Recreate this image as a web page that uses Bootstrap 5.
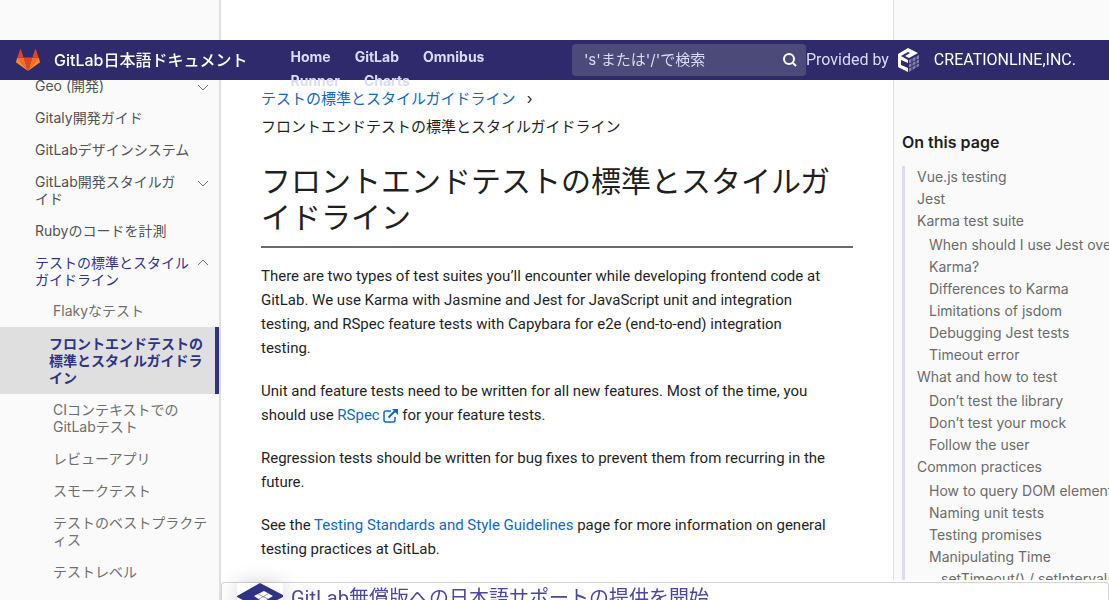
<!DOCTYPE html>
<html lang="ja">
<head>
<meta charset="utf-8">
<meta name="viewport" content="width=device-width, initial-scale=1">
<title>フロントエンドテストの標準とスタイルガイドライン | GitLab日本語ドキュメント</title>
<link href="https://cdn.jsdelivr.net/npm/bootstrap@5.3.0/dist/css/bootstrap.min.css" rel="stylesheet">
<style>
  body { font-family: Inter, "Noto Sans CJK JP", sans-serif; font-size: 15px; line-height: 24px; color: #1f1f1f; background: #fff; }
  a { text-decoration: none; color: #1068bf; }

  .site-header { top: 40px; height: 40px; background: #2f2a6b; z-index: 1030; padding: 0 33px 0 16px; color: #dbdbf8; }
  .site-header a { color: #dbdbf8; }
  .site-header .brand-link, .site-header .company-link { color: #fff; font-size: 16px; white-space: nowrap; }
  .site-header .brand-link { font-weight: 500; gap: 14px; }
  .site-header .company-link { gap: 14px; }
  .provider { font-family: Roboto, "Noto Sans CJK JP", sans-serif; font-size: 16px; }
  .top-links { flex: 1 1 0; font-size: 14px; font-weight: 700; column-gap: 24px; padding: 0 60px 0 43px; height: 30px; }
  .search-box { width: 234px; height: 32px; background: #4c4a79; border-radius: 4px; }
  .search-box input { background: transparent; border: 0; box-shadow: none; color: #dbdbf8; font-size: 15px; padding: 0 12px; }
  .search-box input:focus { background: transparent; color: #fff; box-shadow: none; }
  .search-box input::placeholder { color: #dbdbf8; opacity: 1; }
  .search-box button { color: #fff; padding: 0 8px; border: 0; }

  .side-nav { width: 221px; background: #fafafa; border-right: 2px solid #dfdfdf; padding-top: 70px; font-size: 14px; line-height: 17px; }
  .side-nav a { display: flex; justify-content: space-between; padding: 7px 10px 7px 35px; margin-bottom: 1px; color: #525252; }
  .side-nav a svg { flex: none; margin: 5px 0 0 8px; color: #737373; }
  .side-nav a.open-section { color: #303384; margin-bottom: 0; }
  .side-nav .sub-nav a { color: #6e6e6e; padding: 7px 10px 7px 53px; }
  .side-nav .sub-nav a.current { background: #dfdfdf; color: #303384; font-weight: 700; border-right: 4px solid #303384; padding: 8px 8px 8px 49px; margin-bottom: 0; }

  .article-body { padding: 85px 40px 0; min-width: 0; }
  .crumbs { line-height: 28px; margin-bottom: 22px; }
  .crumbs span { margin-left: 7px; }
  .article-body h1 { font-size: 30px; line-height: 36px; font-weight: 400; padding-bottom: 11px; border-bottom: 2px solid #6b6b6b; margin-bottom: 16px; }
  .article-body p { font-family: Roboto, "Noto Sans CJK JP", sans-serif; margin-bottom: 19px; max-width: 570px; }

  .page-toc { width: 216px; margin-bottom: 20px; padding: 130px 0 0 8px; background: #fafafa; border-left: 1px solid #dfdfdf; }
  .page-toc h2 { font-size: 16px; line-height: 24px; font-weight: 600; margin-bottom: 12px; }
  .toc-list { border-left: 3px solid #dbdbf8; padding-left: 12px; font-size: 14px; line-height: 22px; white-space: nowrap; }
  .toc-list a { color: #6b6b6b; }
  .toc-list ul { padding-left: 12px; margin: 2px 0 0; }
  .toc-list ul ul { margin: 0; }

  .news-bar { left: 221px; height: 18px; background: #fff; border: 1px solid #d4d4d4; border-bottom: 0; border-radius: 4px 4px 0 0; z-index: 1020; padding: 0 15px; }
  .news-bar svg { box-shadow: 0 0 20px rgba(0,0,0,.18); }
  .news-bar a { font-family: Roboto, "Noto Sans CJK JP", sans-serif; font-size: 20px; line-height: 30px; color: #4a47a3; }
</style>
</head>
<body class="vh-100 overflow-hidden">

<header class="site-header position-fixed start-0 end-0 d-flex align-items-center">
  <a class="brand-link d-flex align-items-center" href="#">
    <svg width="24" height="22" viewBox="0 0 24 22" aria-hidden="true">
      <path fill="#e24329" d="M12 22 16.4 8.5H7.6z"/>
      <path fill="#fc6d26" d="M12 22 7.6 8.5H1.4zM12 22 16.4 8.5h6.2z"/>
      <path fill="#fc8a26" d="M1.4 8.5.1 12.6q-.2.7.4 1.1L12 22zM22.6 8.5l1.3 4.1q.2.7-.4 1.1L12 22z"/>
      <path fill="#e24329" d="M1.4 8.5h6.2L4.9.4q-.4-.8-.8 0zM22.6 8.5h-6.2L19.1.4q.4-.8.8 0z"/>
    </svg>
    GitLab日本語ドキュメント
  </a>
  <nav class="top-links d-flex flex-wrap" aria-label="製品">
    <a href="#">Home</a><a href="#">GitLab</a><a href="#">Omnibus</a><a href="#">Runner</a><a href="#">Charts</a>
  </nav>
  <form class="search-box d-flex align-items-center flex-shrink-0" role="search">
    <input class="form-control" type="search" aria-label="検索" placeholder="'s'または'/'で検索">
    <button class="btn d-flex" type="button" aria-label="検索する">
      <svg width="16" height="16" viewBox="0 0 16 16" fill="none" stroke="currentColor" stroke-width="2"><circle cx="7" cy="7" r="5"/><path d="m11 11 3 3"/></svg>
    </button>
  </form>
  <div class="provider d-flex align-items-center text-nowrap">
    <span class="me-2">Provided by</span>
    <a class="company-link d-flex align-items-center" href="#">
      <svg width="23" height="24" viewBox="0 0 23 24" aria-hidden="true">
        <path fill="#fff" d="M11 0 21 5l-9 5-4-2 5-3-2-1-7 4v9l7 3v4L1 19V6z"/>
        <path fill="#fff" d="m4 8 7 4v3l-7-3z"/>
        <path fill="#8582ac" d="m12 12 10-5v11l-10 6z"/>
        <path stroke="#2f2a6b" fill="none" d="m12 16 10-5m-10 9 10-5M15 10v13m4-15v13"/>
      </svg>
      CREATIONLINE,INC.
    </a>
  </div>
</header>

<div class="d-flex h-100">
  <nav class="side-nav flex-shrink-0" aria-label="ドキュメント">
    <a href="#">Geo (開発)<svg width="12" height="12" viewBox="0 0 12 12" fill="none" stroke="currentColor"><path d="m1 3 5 5 5-5"/></svg></a>
    <a href="#">Gitaly開発ガイド</a>
    <a href="#">GitLabデザインシステム</a>
    <a href="#">GitLab開発スタイルガイド<svg width="12" height="12" viewBox="0 0 12 12" fill="none" stroke="currentColor"><path d="m1 3 5 5 5-5"/></svg></a>
    <a href="#">Rubyのコードを計測</a>
    <a class="open-section" href="#">テストの標準とスタイルガイドライン<svg width="12" height="12" viewBox="0 0 12 12" fill="none" stroke="currentColor"><path d="m1 6 5-5 5 5"/></svg></a>
    <div class="sub-nav">
      <a href="#">Flakyなテスト</a>
      <a class="current" href="#" aria-current="page">フロントエンドテストの標準とスタイルガイドライン</a>
      <a href="#">CIコンテキストでのGitLabテスト</a>
      <a href="#">レビューアプリ</a>
      <a href="#">スモークテスト</a>
      <a href="#">テストのベストプラクティス</a>
      <a href="#">テストレベル</a>
    </div>
  </nav>

  <main class="article-body flex-grow-1">
    <div class="crumbs">
      <a href="#">テストの標準とスタイルガイドライン</a> <span>›</span><br>
      フロントエンドテストの標準とスタイルガイドライン
    </div>
    <h1>フロントエンドテストの標準とスタイルガイドライン</h1>
    <p>There are two types of test suites you’ll encounter while developing frontend code at GitLab. We use Karma with Jasmine and Jest for JavaScript unit and integration testing, and RSpec feature tests with Capybara for e2e (end-to-end) integration testing.</p>
    <p>Unit and feature tests need to be written for all new features. Most of the time, you should use <a href="#">RSpec <svg width="15" height="14" viewBox="0 0 15 14" fill="none" stroke="currentColor" stroke-width="1.5" aria-hidden="true"><path d="M8 2H3Q1 2 1 4v7q0 2 2 2h7q2 0 2-2V8"/><path stroke-width="2" d="M5.5 8.5 12 2"/><path fill="currentColor" stroke="none" d="M9 0h6v6z"/></svg></a> for your feature tests.</p>
    <p>Regression tests should be written for bug fixes to prevent them from recurring in the future.</p>
    <p>See the <a href="#">Testing Standards and Style Guidelines</a> page for more information on general testing practices at GitLab.</p>
  </main>

  <aside class="page-toc flex-shrink-0 overflow-hidden">
    <h2>On this page</h2>
    <ul class="toc-list list-unstyled">
      <li><a href="#">Vue.js testing</a></li>
      <li><a href="#">Jest</a></li>
      <li><a href="#">Karma test suite</a>
        <ul class="list-unstyled">
          <li><a href="#">When should I use Jest over<br>Karma?</a></li>
          <li><a href="#">Differences to Karma</a></li>
          <li><a href="#">Limitations of jsdom</a></li>
          <li><a href="#">Debugging Jest tests</a></li>
          <li><a href="#">Timeout error</a></li>
        </ul>
      </li>
      <li><a href="#">What and how to test</a>
        <ul class="list-unstyled">
          <li><a href="#">Don’t test the library</a></li>
          <li><a href="#">Don’t test your mock</a></li>
          <li><a href="#">Follow the user</a></li>
        </ul>
      </li>
      <li><a href="#">Common practices</a>
        <ul class="list-unstyled">
          <li><a href="#">How to query DOM elements</a></li>
          <li><a href="#">Naming unit tests</a></li>
          <li><a href="#">Testing promises</a></li>
          <li><a href="#">Manipulating Time</a>
            <ul class="list-unstyled"><li><a href="#">setTimeout() / setInterval()</a></li></ul>
          </li>
        </ul>
      </li>
    </ul>
  </aside>
</div>

<div class="news-bar position-fixed bottom-0 end-0 d-flex">
  <svg class="flex-shrink-0 me-2" width="46" height="46" viewBox="0 0 46 46" aria-hidden="true">
    <path fill="#303384" d="M23 0 46 12v2L23 26 0 14v-1z"/>
    <path fill="#fff" d="m17 13 10-5 9 5-10 6z"/>
    <path stroke="#303384" stroke-width=".5" fill="none" d="m21 11 10 5M22 16l9-5"/>
    <path fill="#303384" d="m0 17 21 12v16L0 33z"/>
  </svg>
  <a class="text-nowrap" href="#">GitLab無償版への日本語サポートの提供を開始</a>
</div>

<script src="https://cdn.jsdelivr.net/npm/bootstrap@5.3.0/dist/js/bootstrap.bundle.min.js"></script>
</body>
</html>
